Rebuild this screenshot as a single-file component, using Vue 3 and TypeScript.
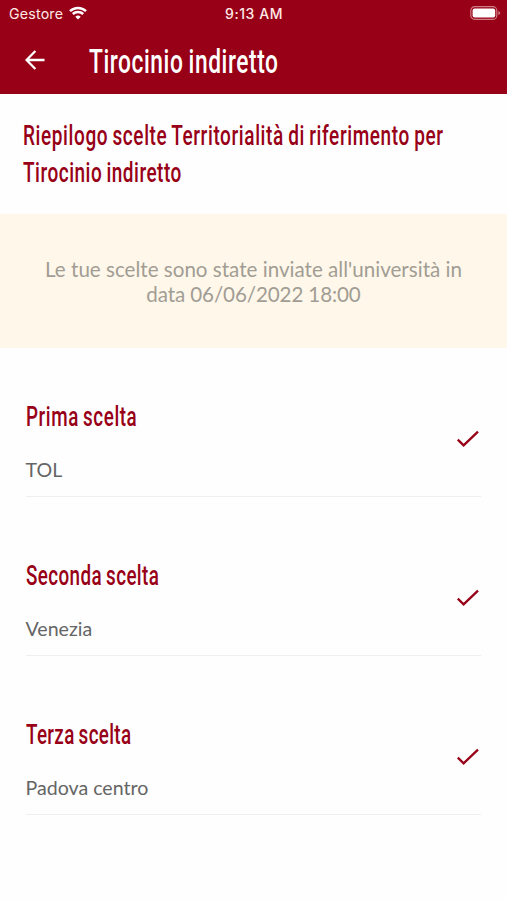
<script setup lang="ts">
interface Choice {
  label: string
  value: string
  key: string
}

const choices: Choice[] = [
  { key: 'first', label: 'Prima scelta', value: 'TOL' },
  { key: 'second', label: 'Seconda scelta', value: 'Venezia' },
  { key: 'third', label: 'Terza scelta', value: 'Padova centro' },
]
</script>

<template>
  <main class="screen">
    <header class="top">
      <div class="status">
        <div class="carrier">
          <span>Gestore</span>
          <svg class="wifi" width="18" height="14" viewBox="0 0 18 14">
            <path d="M1 5.2 A11.5 11.5 0 0 1 17 5.2" />
            <path d="M3.8 8 A7.5 7.5 0 0 1 14.2 8" />
            <path class="dot" d="M9 13.6 L6.3 10.8 A3.8 3.8 0 0 1 11.7 10.8 Z" />
          </svg>
        </div>
        <span class="time">9:13 AM</span>
        <svg class="battery" width="31" height="14" viewBox="0 0 31 14">
          <rect class="shell" x="0.8" y="0.7" width="26" height="12.6" rx="3.8" />
          <rect class="charge" x="2.6" y="2.5" width="22.6" height="9" rx="2" />
          <path class="tip" d="M28.3 5 Q30.2 5.6 30.2 7 Q30.2 8.4 28.3 9 Z" />
        </svg>
      </div>
      <div class="bar">
        <svg class="back" width="20" height="20" viewBox="0 0 20 20">
          <path d="M19.5 10 H1.8 M10.4 1 L1.5 10 L10.4 19" />
        </svg>
        <h1 class="narrow">Tirocinio indiretto</h1>
      </div>
    </header>

    <h2 class="summary">
      <span class="narrow line-one">Riepilogo scelte Territorialità di riferimento per</span>
      <span class="narrow line-two">Tirocinio indiretto</span>
    </h2>

    <p class="notice">Le tue scelte sono state inviate all'università in<br /><span class="date">data 06/06/2022 18:00</span></p>

    <ul class="choices">
      <li v-for="choice in choices" :key="choice.key" class="choice">
        <div>
          <h3 class="narrow" :class="choice.key">{{ choice.label }}</h3>
          <p class="value">{{ choice.value }}</p>
        </div>
        <svg class="check" width="24" height="18" viewBox="0 0 24 18">
          <path d="M1.8 9.6 L7.6 15.3 L22 1.6" />
        </svg>
      </li>
    </ul>
  </main>
</template>

<style>
body {
  background: #fefefe;
}
</style>

<style scoped>
.screen {
  width: 507px;
  height: 900px;
  overflow: hidden;
  background: #fefefe;
  font-family: Lato, sans-serif;
}

h1, h2, h3, p, ul {
  margin: 0;
  padding: 0;
}

.top {
  height: 94px;
  background: #970016;
  color: #fff;
}

.status {
  display: grid;
  grid-template-columns: 1fr auto 1fr;
  align-items: center;
  height: 27px;
  padding: 0 6px 0 9px;
  font: 14.2px/27px Inter, sans-serif;
  color: #ffe9e7;
}

.carrier {
  display: flex;
  align-items: center;
  gap: 6px;
  letter-spacing: 0.2px;
}

.time {
  margin-right: 2px;
  font-size: 14px;
  font-weight: 500;
  letter-spacing: 0.55px;
}

.wifi {
  margin-top: -2px;
  fill: none;
  stroke: #fff;
  stroke-width: 2.5;
}

.wifi .dot {
  fill: #fff;
  stroke: none;
}

.battery {
  justify-self: end;
  margin-top: -1px;
}

.shell {
  fill: none;
  stroke: #cf7c86;
  stroke-width: 1.2;
}

.charge {
  fill: #fff;
}

.tip {
  fill: #cf7c86;
}

.bar {
  display: flex;
  align-items: center;
  height: 67px;
  padding-left: 25px;
  gap: 44px;
}

.back {
  margin-top: -1px;
  fill: none;
  stroke: #fff;
  stroke-width: 2.3;
}

.narrow {
  display: block;
  width: max-content;
  white-space: nowrap;
  font-family: Roboto, sans-serif;
  font-weight: 500;
  word-spacing: -1.5px;
  transform-origin: left;
}

h1 {
  margin-top: 2px;
  font-size: 32.5px;
  line-height: 44px;
  letter-spacing: 0.8px;
  transform: scaleX(0.7);
}

.summary {
  height: 96px;
  padding: 24px 0 0 23px;
  color: #970016;
  font-size: 27.5px;
  line-height: 36.5px;
}

.line-one {
  letter-spacing: 0.9px;
  transform: scaleX(0.69);
}

.line-two {
  letter-spacing: 0.75px;
  transform: scaleX(0.69);
}

.notice {
  height: 91px;
  padding-top: 43px;
  background: #fff7ea;
  color: #a19d94;
  font-size: 20.6px;
  line-height: 24.5px;
  text-align: center;
}

.date {
  letter-spacing: -0.12px;
}

.choices {
  padding: 0 26px;
  list-style: none;
}

.choice {
  display: flex;
  justify-content: space-between;
  height: 149px;
  box-sizing: border-box;
  margin-bottom: 9.8px;
  padding-top: 49px;
  border-bottom: 1px solid #efefef;
}

h3 {
  margin-left: -0.5px;
  color: #970016;
  font-size: 28px;
  line-height: 40px;
  letter-spacing: 0.6px;
  transform: scaleX(0.672);
}

.first {
  letter-spacing: 0.85px;
}

.third {
  letter-spacing: 0.5px;
}

.value {
  margin-top: 19px;
  margin-left: -0.5px;
  color: #656565;
  font-size: 19.6px;
  line-height: 28px;
}

.check {
  margin: 33px 1px 0 0;
  fill: none;
  stroke: #970016;
  stroke-width: 2.3;
}
</style>
